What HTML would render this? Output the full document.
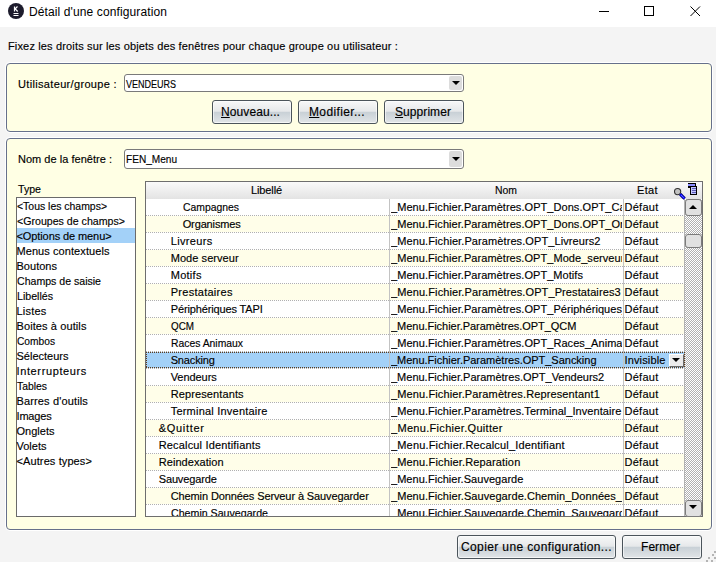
<!DOCTYPE html>
<html><head><meta charset="utf-8"><style>
*{box-sizing:border-box;margin:0;padding:0}
html,body{width:716px;height:562px;overflow:hidden;background:#f4f4f4;font-family:"Liberation Sans",sans-serif;color:#000}
.a{position:absolute}
.t{position:absolute;white-space:pre;color:#000;-webkit-text-stroke:0.15px #000}
.t u{text-decoration:underline;text-underline-offset:1px}
#title{left:0;top:0;width:716px;height:27px;background:#fff}
.panel{position:absolute;left:6px;width:706px;border:1px solid #66708b;border-radius:4px;background:#ffffe4;box-shadow:0 0 0 1px #fff}
.combo{position:absolute;left:124px;width:340px;border:1px solid #7a7a7a;border-radius:3px;background:#fff}
.combo .dd{position:absolute;right:1px;top:1px;bottom:1px;width:13px;background:#dcdcdc;border-radius:2px}
.arr{position:absolute;width:0;height:0;border-left:4px solid transparent;border-right:4px solid transparent;border-top:4px solid #000}
.arrup{position:absolute;width:0;height:0;border-left:4px solid transparent;border-right:4px solid transparent;border-bottom:4px solid #000}
.btn{position:absolute;height:24px;border:1px solid #4b545b;border-radius:3px;
 background:linear-gradient(#f7f8f8 0%,#e6e8ea 47%,#c8d0d6 50%,#dfe3e6 96%,#f0f2f3 100%);
 box-shadow:inset 0 0 0 1px rgba(255,255,255,0.6)}
#lb{position:absolute;left:16px;top:197px;width:120px;height:320px;border:1px solid #6a6a6a;background:#fff}
#tbl{position:absolute;left:145px;top:181px;width:558px;height:336px;border:1px solid #6e6e6e;background:#fff;overflow:hidden}
#hdr{position:absolute;left:146px;top:182px;width:556px;height:17px;background:linear-gradient(#fafafa,#e3e3e3)}
.row{position:absolute;left:146px;width:538px}
.dot{position:absolute;left:146px;width:538px;height:1px;background:repeating-linear-gradient(90deg,#b0b0b0 0 1px,transparent 1px 2px)}
.vsep{position:absolute;top:199px;width:1px;height:317px;background:#c3c3c3}
#track{position:absolute;left:685px;top:199px;width:17px;height:317px;background-color:#d9d9d9;
 background-image:repeating-conic-gradient(#b0b0b0 0 25%,#ffffff 0 50%);background-size:2px 2px}
.sbtn{position:absolute;left:685px;width:17px;height:17px;border:1px solid #7c7c7c;border-radius:3px;background:#e1e1e1}
</style></head><body>
<div id="title"></div>
<!-- app icon -->
<div class="a" style="left:8px;top:3px;width:16px;height:16px;border-radius:50%;background:#1d1c2d"></div>
<svg class="a" style="left:8px;top:3px" width="16" height="16" viewBox="0 0 16 16">
 <path d="M6.5 3.5v5M6.5 6.5L9.5 3.5M7.3 5.8L9.7 8.5" stroke="#fff" stroke-width="1.2" fill="none"/>
 <path d="M5.5 10.5h5M5.5 12.5h5" stroke="#fff" stroke-width="1" fill="none"/>
</svg>
<!-- window controls -->
<div class="a" style="left:599px;top:11px;width:10px;height:1px;background:#000"></div>
<div class="a" style="left:644px;top:6px;width:10px;height:10px;border:1px solid #000"></div>
<svg class="a" style="left:689px;top:5px" width="13" height="13" viewBox="0 0 13 13">
 <path d="M1.5 1.5L11 11M11 1.5L1.5 11" stroke="#000" stroke-width="1" fill="none"/>
</svg>

<!-- panel 1 -->
<div class="panel" style="top:63px;height:69px"></div>
<div class="combo" style="top:74px;height:18px"><div class="dd"></div></div>
<div class="arr" style="left:452px;top:81px"></div>
<div class="btn" style="left:212px;top:100px;width:80px"></div>
<div class="btn" style="left:298px;top:100px;width:80px"></div>
<div class="btn" style="left:384px;top:100px;width:80px"></div>

<!-- panel 2 -->
<div class="panel" style="top:138px;height:392px"></div>
<div class="combo" style="top:149px;height:20px"><div class="dd"></div></div>
<div class="arr" style="left:452px;top:157px"></div>

<!-- listbox -->
<div id="lb"></div>
<div class="a" style="left:17px;top:228px;width:118px;height:15px;background:#a3d1f8"></div>

<!-- table -->
<div id="tbl"></div>
<div id="hdr"></div>
<div class="row" style="top:199px;height:16px;background:#ffffff"></div>
<div class="dot" style="top:215px"></div>
<div class="row" style="top:216px;height:16px;background:#fffee9"></div>
<div class="dot" style="top:232px"></div>
<div class="row" style="top:233px;height:16px;background:#ffffff"></div>
<div class="dot" style="top:249px"></div>
<div class="row" style="top:250px;height:16px;background:#fffee9"></div>
<div class="dot" style="top:266px"></div>
<div class="row" style="top:267px;height:16px;background:#ffffff"></div>
<div class="dot" style="top:283px"></div>
<div class="row" style="top:284px;height:16px;background:#fffee9"></div>
<div class="dot" style="top:300px"></div>
<div class="row" style="top:301px;height:16px;background:#ffffff"></div>
<div class="dot" style="top:317px"></div>
<div class="row" style="top:318px;height:16px;background:#fffee9"></div>
<div class="dot" style="top:334px"></div>
<div class="row" style="top:335px;height:16px;background:#ffffff"></div>
<div class="dot" style="top:351px"></div>
<div class="row" style="top:352px;height:16px;background:#a3d1f8"></div>
<div class="dot" style="top:368px"></div>
<div class="row" style="top:369px;height:16px;background:#ffffff"></div>
<div class="dot" style="top:385px"></div>
<div class="row" style="top:386px;height:16px;background:#fffee9"></div>
<div class="dot" style="top:402px"></div>
<div class="row" style="top:403px;height:16px;background:#ffffff"></div>
<div class="dot" style="top:419px"></div>
<div class="row" style="top:420px;height:16px;background:#fffee9"></div>
<div class="dot" style="top:436px"></div>
<div class="row" style="top:437px;height:16px;background:#ffffff"></div>
<div class="dot" style="top:453px"></div>
<div class="row" style="top:454px;height:16px;background:#fffee9"></div>
<div class="dot" style="top:470px"></div>
<div class="row" style="top:471px;height:16px;background:#ffffff"></div>
<div class="dot" style="top:487px"></div>
<div class="row" style="top:488px;height:16px;background:#fffee9"></div>
<div class="dot" style="top:504px"></div>
<div class="row" style="top:505px;height:11px;background:#ffffff"></div>
<div class="vsep" style="left:389px"></div>
<div class="vsep" style="left:623px"></div>
<!-- selection focus rect -->
<div class="a" style="left:146px;top:352px;width:539px;height:1px;background:repeating-linear-gradient(90deg,#5e3c1c 0 1px,transparent 1px 2px)"></div>
<div class="a" style="left:146px;top:367px;width:539px;height:1px;background:repeating-linear-gradient(90deg,#5e3c1c 0 1px,transparent 1px 2px)"></div>
<div class="a" style="left:146px;top:352px;width:1px;height:16px;background:repeating-linear-gradient(180deg,#5e3c1c 0 1px,transparent 1px 2px)"></div>

<!-- inline combo in selected row -->
<div class="a" style="left:669px;top:354px;width:15px;height:13px;background:#ececec;border-right:1px solid #6a6a6a;border-bottom:1px solid #6a6a6a;border-top:1px solid #fff;border-left:1px solid #fff"></div>
<div class="arr" style="left:672px;top:358px;border-left-width:4px;border-right-width:4px;border-top-width:4px"></div>
<!-- scrollbar -->
<div id="track"></div>
<div class="a" style="left:684px;top:199px;width:1px;height:317px;background:#b2b2b2"></div>
<div class="sbtn" style="top:199px"></div>
<div class="a" style="left:684px;top:352px;width:1px;height:16px;background:repeating-linear-gradient(180deg,#5e3c1c 0 1px,transparent 1px 2px)"></div>
<div class="arrup" style="left:689px;top:205px"></div>
<div class="sbtn" style="top:234px;height:14px"></div>
<div class="sbtn" style="top:500px"></div>
<div class="arr" style="left:689px;top:505px"></div>
<!-- header icons -->
<svg class="a" style="left:672px;top:186px" width="14" height="14" viewBox="0 0 14 14">
 <circle cx="5.6" cy="5.6" r="3.1" fill="#c2c2c2" stroke="#303030" stroke-width="1.1"/>
 <path d="M3.5 4.2A2.2 2.2 0 0 1 5 3.3" stroke="#9a9a9a" stroke-width="1" fill="none"/>
 <path d="M8.2 8.2L12.6 12.6" stroke="#000060" stroke-width="3.2"/>
 <path d="M8.2 8.2L12.6 12.6" stroke="#0000ff" stroke-width="2"/>
 <path d="M9.3 9.3L12.2 12.2" stroke="#ffffff" stroke-width="0.7" stroke-dasharray="0.8 0.8"/>
</svg>
<svg class="a" style="left:687px;top:182px" width="12" height="15" viewBox="0 0 12 15" shape-rendering="crispEdges">
 <rect x="1" y="1" width="8" height="5" fill="#000"/>
 <rect x="1" y="2" width="7" height="2" fill="#8a8cff"/>
 <rect x="3" y="4" width="7" height="9" fill="#000"/>
 <rect x="4" y="5" width="5" height="7" fill="#c3c6ff"/>
 <rect x="5" y="6" width="4" height="1" fill="#5a5ab8"/>
 <rect x="5" y="8" width="4" height="1" fill="#5a5ab8"/>
 <rect x="5" y="10" width="4" height="1" fill="#5a5ab8"/>
</svg>

<!-- bottom buttons -->
<div class="btn" style="left:457px;top:535px;width:159px"></div>
<div class="btn" style="left:622px;top:535px;width:80px"></div>
<!-- resize grip -->
<svg class="a" style="left:700px;top:546px" width="16" height="16" viewBox="0 0 16 16" shape-rendering="crispEdges">
 <g fill="#b4b4b4"><rect x="14" y="5" width="2" height="2"/><rect x="12" y="8" width="2" height="2"/><rect x="14" y="11" width="2" height="2"/>
 <rect x="8" y="11" width="2" height="2"/><rect x="6" y="14" width="2" height="2"/><rect x="11" y="14" width="2" height="2"/></g>
</svg>

<div class="t" style="left:29px;top:6px;font-size:12px;line-height:12px;letter-spacing:0.114px;-webkit-text-stroke:0;">Détail d&#x27;une configuration</div>
<div class="t" style="left:8px;top:41px;font-size:11px;line-height:11px;letter-spacing:0.152px;">Fixez les droits sur les objets des fenêtres pour chaque groupe ou utilisateur :</div>
<div class="t" style="left:18px;top:79px;font-size:11px;line-height:11px;letter-spacing:0.334px;">Utilisateur/groupe :</div>
<div class="t" style="left:126px;top:79px;font-size:11px;line-height:11px;letter-spacing:0.000px;transform:scaleX(0.8180);transform-origin:0 0;">VENDEURS</div>
<div class="t" style="left:18px;top:154px;font-size:11px;line-height:11px;letter-spacing:0.023px;">Nom de la fenêtre :</div>
<div class="t" style="left:126px;top:154px;font-size:11px;line-height:11px;letter-spacing:0.000px;transform:scaleX(0.9166);transform-origin:0 0;">FEN_Menu</div>
<div class="t" style="left:18px;top:184px;font-size:11px;line-height:11px;letter-spacing:0.000px;transform:scaleX(0.9640);transform-origin:0 0;">Type</div>
<div class="t" style="left:221px;top:106px;font-size:12px;line-height:12px;letter-spacing:0.095px;"><u>N</u>ouveau...</div>
<div class="t" style="left:309px;top:106px;font-size:12px;line-height:12px;letter-spacing:0.361px;"><u>M</u>odifier...</div>
<div class="t" style="left:395px;top:106px;font-size:12px;line-height:12px;letter-spacing:0.071px;"><u>S</u>upprimer</div>
<div class="t" style="left:461px;top:541px;font-size:12px;line-height:12px;letter-spacing:0.379px;">Copier une configuration...</div>
<div class="t" style="left:641px;top:541px;font-size:12px;line-height:12px;letter-spacing:0.055px;">Fermer</div>
<div class="t" style="left:251px;top:185px;font-size:11px;line-height:11px;letter-spacing:-0.116px;">Libellé</div>
<div class="t" style="left:495px;top:185px;font-size:11px;line-height:11px;letter-spacing:0.000px;transform:scaleX(0.9469);transform-origin:0 0;">Nom</div>
<div class="t" style="left:637px;top:185px;font-size:11px;line-height:11px;letter-spacing:0.355px;">Etat</div>
<div class="t" style="left:16.5px;top:201px;font-size:11px;line-height:11px;letter-spacing:0.000px;transform:scaleX(0.9496);transform-origin:0 0;">&lt;Tous les champs&gt;</div>
<div class="t" style="left:16.5px;top:216px;font-size:11px;line-height:11px;letter-spacing:0.000px;transform:scaleX(0.9651);transform-origin:0 0;">&lt;Groupes de champs&gt;</div>
<div class="t" style="left:16.5px;top:231px;font-size:11px;line-height:11px;letter-spacing:-0.096px;">&lt;Options de menu&gt;</div>
<div class="t" style="left:16.5px;top:246px;font-size:11px;line-height:11px;letter-spacing:0.075px;">Menus contextuels</div>
<div class="t" style="left:16.5px;top:261px;font-size:11px;line-height:11px;letter-spacing:0.018px;">Boutons</div>
<div class="t" style="left:16.5px;top:276px;font-size:11px;line-height:11px;letter-spacing:0.000px;transform:scaleX(0.9607);transform-origin:0 0;">Champs de saisie</div>
<div class="t" style="left:16.5px;top:291px;font-size:11px;line-height:11px;letter-spacing:0.000px;transform:scaleX(0.9648);transform-origin:0 0;">Libellés</div>
<div class="t" style="left:16.5px;top:306px;font-size:11px;line-height:11px;letter-spacing:0.208px;">Listes</div>
<div class="t" style="left:16.5px;top:321px;font-size:11px;line-height:11px;letter-spacing:0.101px;">Boites à outils</div>
<div class="t" style="left:16.5px;top:336px;font-size:11px;line-height:11px;letter-spacing:0.000px;transform:scaleX(0.9275);transform-origin:0 0;">Combos</div>
<div class="t" style="left:16.5px;top:351px;font-size:11px;line-height:11px;letter-spacing:0.002px;">Sélecteurs</div>
<div class="t" style="left:16.5px;top:366px;font-size:11px;line-height:11px;letter-spacing:0.625px;">Interrupteurs</div>
<div class="t" style="left:16.5px;top:381px;font-size:11px;line-height:11px;letter-spacing:0.000px;transform:scaleX(0.9435);transform-origin:0 0;">Tables</div>
<div class="t" style="left:16.5px;top:396px;font-size:11px;line-height:11px;letter-spacing:0.143px;">Barres d&#x27;outils</div>
<div class="t" style="left:16.5px;top:411px;font-size:11px;line-height:11px;letter-spacing:-0.180px;">Images</div>
<div class="t" style="left:16.5px;top:426px;font-size:11px;line-height:11px;letter-spacing:0.011px;">Onglets</div>
<div class="t" style="left:16.5px;top:441px;font-size:11px;line-height:11px;letter-spacing:0.005px;">Volets</div>
<div class="t" style="left:16.5px;top:456px;font-size:11px;line-height:11px;letter-spacing:0.107px;">&lt;Autres types&gt;</div>
<div class="a" style="left:146px;top:199px;width:539px;height:317px;overflow:hidden">
<div class="t" style="left:36.69999999999999px;top:3px;font-size:11px;line-height:11px;letter-spacing:0.000px;transform:scaleX(0.9439);transform-origin:0 0;">Campagnes</div>
<div class="t" style="left:245px;top:3px;font-size:11px;line-height:11px;letter-spacing:0.059px;width:231px;overflow:hidden;">_Menu.Fichier.Paramètres.OPT_Dons.OPT_Campagnes</div>
<div class="t" style="left:478.5px;top:3px;font-size:11px;line-height:11px;letter-spacing:0.263px;">Défaut</div>
<div class="t" style="left:36.69999999999999px;top:20px;font-size:11px;line-height:11px;letter-spacing:-0.130px;">Organismes</div>
<div class="t" style="left:245px;top:20px;font-size:11px;line-height:11px;letter-spacing:0.058px;width:231px;overflow:hidden;">_Menu.Fichier.Paramètres.OPT_Dons.OPT_Organismes</div>
<div class="t" style="left:478.5px;top:20px;font-size:11px;line-height:11px;letter-spacing:0.263px;">Défaut</div>
<div class="t" style="left:24.69999999999999px;top:37px;font-size:11px;line-height:11px;letter-spacing:0.359px;">Livreurs</div>
<div class="t" style="left:245px;top:37px;font-size:11px;line-height:11px;letter-spacing:0.091px;width:231px;overflow:hidden;">_Menu.Fichier.Paramètres.OPT_Livreurs2</div>
<div class="t" style="left:478.5px;top:37px;font-size:11px;line-height:11px;letter-spacing:0.263px;">Défaut</div>
<div class="t" style="left:24.69999999999999px;top:54px;font-size:11px;line-height:11px;letter-spacing:0.061px;">Mode serveur</div>
<div class="t" style="left:245px;top:54px;font-size:11px;line-height:11px;letter-spacing:0.056px;width:231px;overflow:hidden;">_Menu.Fichier.Paramètres.OPT_Mode_serveur</div>
<div class="t" style="left:478.5px;top:54px;font-size:11px;line-height:11px;letter-spacing:0.263px;">Défaut</div>
<div class="t" style="left:24.69999999999999px;top:71px;font-size:11px;line-height:11px;letter-spacing:0.276px;">Motifs</div>
<div class="t" style="left:245px;top:71px;font-size:11px;line-height:11px;letter-spacing:0.054px;width:231px;overflow:hidden;">_Menu.Fichier.Paramètres.OPT_Motifs</div>
<div class="t" style="left:478.5px;top:71px;font-size:11px;line-height:11px;letter-spacing:0.263px;">Défaut</div>
<div class="t" style="left:24.69999999999999px;top:88px;font-size:11px;line-height:11px;letter-spacing:0.275px;">Prestataires</div>
<div class="t" style="left:245px;top:88px;font-size:11px;line-height:11px;letter-spacing:0.098px;width:231px;overflow:hidden;">_Menu.Fichier.Paramètres.OPT_Prestataires3</div>
<div class="t" style="left:478.5px;top:88px;font-size:11px;line-height:11px;letter-spacing:0.263px;">Défaut</div>
<div class="t" style="left:24.69999999999999px;top:105px;font-size:11px;line-height:11px;letter-spacing:-0.132px;">Périphériques TAPI</div>
<div class="t" style="left:245px;top:105px;font-size:11px;line-height:11px;letter-spacing:0.055px;width:231px;overflow:hidden;">_Menu.Fichier.Paramètres.OPT_Périphériques_TAPI</div>
<div class="t" style="left:478.5px;top:105px;font-size:11px;line-height:11px;letter-spacing:0.263px;">Défaut</div>
<div class="t" style="left:24.69999999999999px;top:122px;font-size:11px;line-height:11px;letter-spacing:0.000px;transform:scaleX(0.8959);transform-origin:0 0;">QCM</div>
<div class="t" style="left:245px;top:122px;font-size:11px;line-height:11px;letter-spacing:-0.033px;width:231px;overflow:hidden;">_Menu.Fichier.Paramètres.OPT_QCM</div>
<div class="t" style="left:478.5px;top:122px;font-size:11px;line-height:11px;letter-spacing:0.263px;">Défaut</div>
<div class="t" style="left:24.69999999999999px;top:139px;font-size:11px;line-height:11px;letter-spacing:0.000px;transform:scaleX(0.9419);transform-origin:0 0;">Races Animaux</div>
<div class="t" style="left:245px;top:139px;font-size:11px;line-height:11px;letter-spacing:0.057px;width:231px;overflow:hidden;">_Menu.Fichier.Paramètres.OPT_Races_Animaux</div>
<div class="t" style="left:478.5px;top:139px;font-size:11px;line-height:11px;letter-spacing:0.263px;">Défaut</div>
<div class="t" style="left:24.69999999999999px;top:156px;font-size:11px;line-height:11px;letter-spacing:-0.158px;">Snacking</div>
<div class="t" style="left:245px;top:156px;font-size:11px;line-height:11px;letter-spacing:-0.015px;width:231px;overflow:hidden;">_Menu.Fichier.Paramètres.OPT_Sancking</div>
<div class="t" style="left:478.5px;top:156px;font-size:11px;line-height:11px;letter-spacing:0.139px;">Invisible</div>
<div class="t" style="left:24.69999999999999px;top:173px;font-size:11px;line-height:11px;letter-spacing:-0.061px;">Vendeurs</div>
<div class="t" style="left:245px;top:173px;font-size:11px;line-height:11px;letter-spacing:-0.005px;width:231px;overflow:hidden;">_Menu.Fichier.Paramètres.OPT_Vendeurs2</div>
<div class="t" style="left:478.5px;top:173px;font-size:11px;line-height:11px;letter-spacing:0.263px;">Défaut</div>
<div class="t" style="left:24.69999999999999px;top:190px;font-size:11px;line-height:11px;letter-spacing:0.112px;">Representants</div>
<div class="t" style="left:245px;top:190px;font-size:11px;line-height:11px;letter-spacing:0.123px;width:231px;overflow:hidden;">_Menu.Fichier.Paramètres.Representant1</div>
<div class="t" style="left:478.5px;top:190px;font-size:11px;line-height:11px;letter-spacing:0.263px;">Défaut</div>
<div class="t" style="left:24.69999999999999px;top:207px;font-size:11px;line-height:11px;letter-spacing:0.214px;">Terminal Inventaire</div>
<div class="t" style="left:245px;top:207px;font-size:11px;line-height:11px;letter-spacing:0.052px;width:231px;overflow:hidden;">_Menu.Fichier.Paramètres.Terminal_Inventaire</div>
<div class="t" style="left:478.5px;top:207px;font-size:11px;line-height:11px;letter-spacing:0.263px;">Défaut</div>
<div class="t" style="left:12.699999999999989px;top:224px;font-size:11px;line-height:11px;letter-spacing:0.705px;">&amp;Quitter</div>
<div class="t" style="left:245px;top:224px;font-size:11px;line-height:11px;letter-spacing:0.312px;width:231px;overflow:hidden;">_Menu.Fichier.Quitter</div>
<div class="t" style="left:478.5px;top:224px;font-size:11px;line-height:11px;letter-spacing:0.263px;">Défaut</div>
<div class="t" style="left:12.699999999999989px;top:241px;font-size:11px;line-height:11px;letter-spacing:0.169px;">Recalcul Identifiants</div>
<div class="t" style="left:245px;top:241px;font-size:11px;line-height:11px;letter-spacing:0.163px;width:231px;overflow:hidden;">_Menu.Fichier.Recalcul_Identifiant</div>
<div class="t" style="left:478.5px;top:241px;font-size:11px;line-height:11px;letter-spacing:0.263px;">Défaut</div>
<div class="t" style="left:12.699999999999989px;top:258px;font-size:11px;line-height:11px;letter-spacing:0.065px;">Reindexation</div>
<div class="t" style="left:245px;top:258px;font-size:11px;line-height:11px;letter-spacing:0.143px;width:231px;overflow:hidden;">_Menu.Fichier.Reparation</div>
<div class="t" style="left:478.5px;top:258px;font-size:11px;line-height:11px;letter-spacing:0.263px;">Défaut</div>
<div class="t" style="left:12.699999999999989px;top:275px;font-size:11px;line-height:11px;letter-spacing:-0.133px;">Sauvegarde</div>
<div class="t" style="left:245px;top:275px;font-size:11px;line-height:11px;letter-spacing:0.039px;width:231px;overflow:hidden;">_Menu.Fichier.Sauvegarde</div>
<div class="t" style="left:478.5px;top:275px;font-size:11px;line-height:11px;letter-spacing:0.263px;">Défaut</div>
<div class="t" style="left:24.69999999999999px;top:292px;font-size:11px;line-height:11px;letter-spacing:-0.105px;">Chemin Données Serveur à Sauvegarder</div>
<div class="t" style="left:245px;top:292px;font-size:11px;line-height:11px;letter-spacing:0.057px;width:231px;overflow:hidden;">_Menu.Fichier.Sauvegarde.Chemin_Données_Serveur</div>
<div class="t" style="left:478.5px;top:292px;font-size:11px;line-height:11px;letter-spacing:0.263px;">Défaut</div>
<div class="t" style="left:24.69999999999999px;top:309px;font-size:11px;line-height:11px;letter-spacing:0.000px;transform:scaleX(0.9671);transform-origin:0 0;">Chemin Sauvegarde</div>
<div class="t" style="left:245px;top:309px;font-size:11px;line-height:11px;letter-spacing:0.057px;width:231px;overflow:hidden;">_Menu.Fichier.Sauvegarde.Chemin_Sauvegarde</div>
<div class="t" style="left:478.5px;top:309px;font-size:11px;line-height:11px;letter-spacing:0.263px;">Défaut</div>
</div>
</body></html>
